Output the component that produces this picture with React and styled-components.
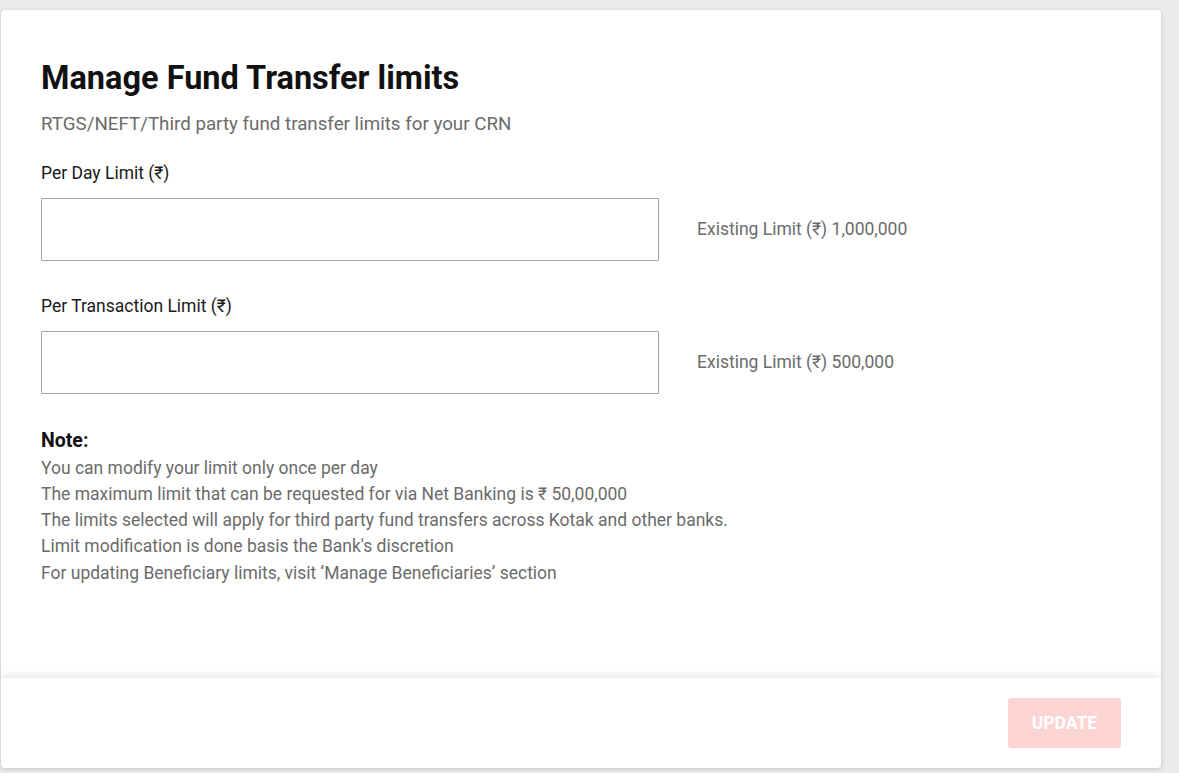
import styled, { createGlobalStyle } from "styled-components";

const GlobalStyle = createGlobalStyle`
  html, body {
    margin: 0;
    padding: 0;
    background: #ebebeb;
    font-family: Roboto, "Noto Sans", "DejaVu Sans", sans-serif;
  }
`;

const Page = styled.div`
  padding: 10px 18px 5px 1px;
  height: 773px;
  box-sizing: border-box;
`;

const Card = styled.section`
  background: #fff;
  border-radius: 4px;
  box-shadow: 0 1px 4px rgba(0, 0, 0, 0.18);
  height: 100%;
  display: flex;
  flex-direction: column;
  overflow: hidden;
`;

const Body = styled.div`
  flex: 1;
  padding: 49px 40px 0 40px;
`;

const Title = styled.h1`
  margin: 0;
  font-size: 32.5px;
  line-height: 38.4px;
  font-weight: 700;
  color: #111;
`;

const Subtitle = styled.p`
  margin: 15px 0 0;
  font-size: 18.75px;
  line-height: 24px;
  color: #6b6b6b;
`;

const Field = styled.div`
  margin-top: ${({ $gap }) => $gap}px;
`;

const Label = styled.label`
  display: block;
  font-size: 17.5px;
  line-height: 24px;
  color: #1a1a1a;
  margin-bottom: 13px;
`;

const Row = styled.div`
  display: flex;
  align-items: center;
  gap: 38px;
`;

const Input = styled.input`
  width: 618px;
  height: 63px;
  box-sizing: border-box;
  border: 1px solid #a3a3a3;
  border-radius: 1px;
  padding: 0 16px;
  font-size: 17px;
  font-family: inherit;
  outline: none;
`;

const Existing = styled.span`
  font-size: 17.5px;
  color: #6b6b6b;
  margin-top: -2px;
`;

const Notes = styled.div`
  margin-top: 34px;
  font-size: 17.5px;
  line-height: 26.25px;
  color: #6b6b6b;
`;

const NoteHead = styled.div`
  font-weight: 700;
  font-size: 19.5px;
  color: #111;
`;

const Footer = styled.footer`
  height: 90px;
  flex-shrink: 0;
  display: flex;
  align-items: center;
  justify-content: flex-end;
  padding-right: 40px;
  box-shadow: 0 -3px 7px rgba(0, 0, 0, 0.09);
  position: relative;
`;

const Button = styled.button`
  width: 113px;
  height: 50px;
  border: none;
  border-radius: 3px;
  background: #fcd4d4;
  color: #fff;
  font-family: inherit;
  font-weight: 700;
  font-size: 17.5px;
  text-transform: uppercase;
  cursor: not-allowed;
`;

const notes = [
  "You can modify your limit only once per day",
  "The maximum limit that can be requested for via Net Banking is ₹ 50,00,000",
  "The limits selected will apply for third party fund transfers across Kotak and other banks.",
  "Limit modification is done basis the Bank's discretion",
  "For updating Beneficiary limits, visit ‘Manage Beneficiaries’ section",
];

const App = () => {
  return (
    <>
      <GlobalStyle />
      <Page>
        <Card>
          <Body>
            <Title>Manage Fund Transfer limits</Title>
            <Subtitle>RTGS/NEFT/Third party fund transfer limits for your CRN</Subtitle>

            <Field $gap={25}>
              <Label>Per Day Limit (₹)</Label>
              <Row>
                <Input type="text" />
                <Existing>Existing Limit (₹) 1,000,000</Existing>
              </Row>
            </Field>

            <Field $gap={33}>
              <Label>Per Transaction Limit (₹)</Label>
              <Row>
                <Input type="text" />
                <Existing>Existing Limit (₹) 500,000</Existing>
              </Row>
            </Field>

            <Notes>
              <NoteHead>Note:</NoteHead>
              {notes.map((n) => (
                <div key={n}>{n}</div>
              ))}
            </Notes>
          </Body>
          <Footer>
            <Button disabled>Update</Button>
          </Footer>
        </Card>
      </Page>
    </>
  );
};

export default App;
